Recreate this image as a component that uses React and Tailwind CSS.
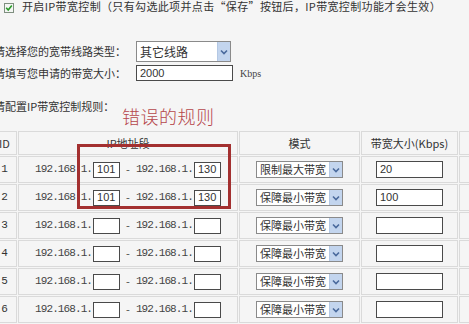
import React from "react";

const rows = [
  { id: 1, a: "101", b: "130", mode: "限制最大带宽", bw: "20" },
  { id: 2, a: "101", b: "130", mode: "保障最小带宽", bw: "100" },
  { id: 3, a: "", b: "", mode: "保障最小带宽", bw: "" },
  { id: 4, a: "", b: "", mode: "保障最小带宽", bw: "" },
  { id: 5, a: "", b: "", mode: "保障最小带宽", bw: "" },
  { id: 6, a: "", b: "", mode: "保障最小带宽", bw: "" },
];

const Arrow = ({ className }) => (
  <span className={"flex items-center justify-center bg-[#c3d5ee] border-l border-[#b4c8e4] " + className}>
    <svg width="8" height="6" viewBox="0 0 8 6">
      <path d="M1 1.5 L4 4.5 L7 1.5" fill="none" stroke="#4a6a9c" strokeWidth="1.6" />
    </svg>
  </span>
);

const Select = ({ value, w, h }) => (
  <div className={"flex bg-white border border-[#8a8a8a] whitespace-nowrap " + w + " " + h}>
    <span className="flex-1 pl-[3px] leading-none flex items-center">{value}</span>
    <Arrow className="w-[13px]" />
  </div>
);

const Box = ({ value, className }) => (
  <div className={"shrink-0 bg-white border border-[#4a4a4a] flex items-center pl-[3px] text-[11px] " + className}>
    <span className="font-['Liberation_Sans',sans-serif]">{value}</span>
  </div>
);

const Ip = () => (
  <span className="whitespace-nowrap font-['Liberation_Mono',monospace] text-[11px] tracking-[-0.9px] text-[#444]">
    192.168.1.
  </span>
);

const cell = "border border-[#dadada] p-0";

export default function App() {
  return (
    <div className="w-[469px] h-[324px] overflow-hidden bg-[#f5f5f5] relative text-[#333] text-[11px] font-['Noto_Sans_CJK_SC',sans-serif]">
      <div className="flex items-center h-[13px] leading-[13px]">
        <svg className="ml-[4px] mt-[3px] shrink-0" width="10" height="10" viewBox="0 0 10 10">
          <rect x="0.5" y="0.5" width="9" height="9" fill="#f4f6f4" stroke="#7f8f80" />
          <path d="M2.2 4.8 L4.2 7 L7.8 2.6" fill="none" stroke="#2a9a2a" strokeWidth="1.6" />
        </svg>
        <span className="ml-[8px] tracking-[0.35px] whitespace-nowrap">
          开启IP带宽控制（只有勾选此项并点击“保存”按钮后，IP带宽控制功能才会生效）
        </span>
      </div>

      <div className="flex items-center mt-[28px] ml-[-6px]">
        <span className="w-[142px] shrink-0 whitespace-nowrap">请选择您的宽带线路类型：</span>
        <Select value={<span className="text-[12px]">其它线路</span>} w="w-[95px]" h="h-[21px]" />
      </div>
      <div className="flex items-center mt-[3px] ml-[-6px]">
        <span className="w-[142px] shrink-0 whitespace-nowrap">请填写您申请的带宽大小：</span>
        <Box value="2000" className="w-[97px] h-[16px]" />
        <span className="ml-[7px] font-['Liberation_Serif',serif] text-[10px] text-[#444]">Kbps</span>
      </div>

      <div className="ml-[-6px] mt-[16px] whitespace-nowrap">请配置IP带宽控制规则：</div>

      <table className="mt-[16px] ml-[-9px] w-[505px] border-separate border-spacing-[1px] table-fixed">
        <thead>
          <tr className="h-[24px]">
            <th className={cell + " w-[25px] font-normal"}>ID</th>
            <th className={cell + " w-[220px] font-normal"}>IP地址段</th>
            <th className={cell + " w-[121px] font-normal"}>模式</th>
            <th className={cell + " w-[97px] font-normal whitespace-nowrap"}>带宽大小(Kbps)</th>
            <th className={cell + " w-[36px]"}></th>
          </tr>
        </thead>
        <tbody>
          {rows.map((r) => (
            <tr key={r.id} className="h-[27px]">
              <td className={cell + " text-center font-['Liberation_Mono',monospace] text-[11px]"}>{r.id}</td>
              <td className={cell}>
                <div className="flex items-center justify-center">
                  <Ip />
                  <Box value={r.a} className="w-[27px] h-[16px] ml-[1px]" />
                  <span className="mx-[6px] text-[#444]">-</span>
                  <Ip />
                  <Box value={r.b} className="w-[27px] h-[16px] ml-[1px]" />
                </div>
              </td>
              <td className={cell}>
                <div className="flex justify-center">
                  <Select value={r.mode} w="w-[87px]" h="h-[17px]" />
                </div>
              </td>
              <td className={cell}>
                <div className="flex justify-center">
                  <Box value={r.bw} className="w-[67px] h-[17px]" />
                </div>
              </td>
              <td className={cell}></td>
            </tr>
          ))}
        </tbody>
      </table>

      <div className="absolute left-[122px] top-[106px] text-[18px] leading-[20px] text-[#b5474b] font-light tracking-[0.5px]">
        错误的规则
      </div>
      <div className="absolute left-[77px] top-[144px] w-[154px] h-[65px] border-[3px] border-[#a33030]"></div>
    </div>
  );
}
